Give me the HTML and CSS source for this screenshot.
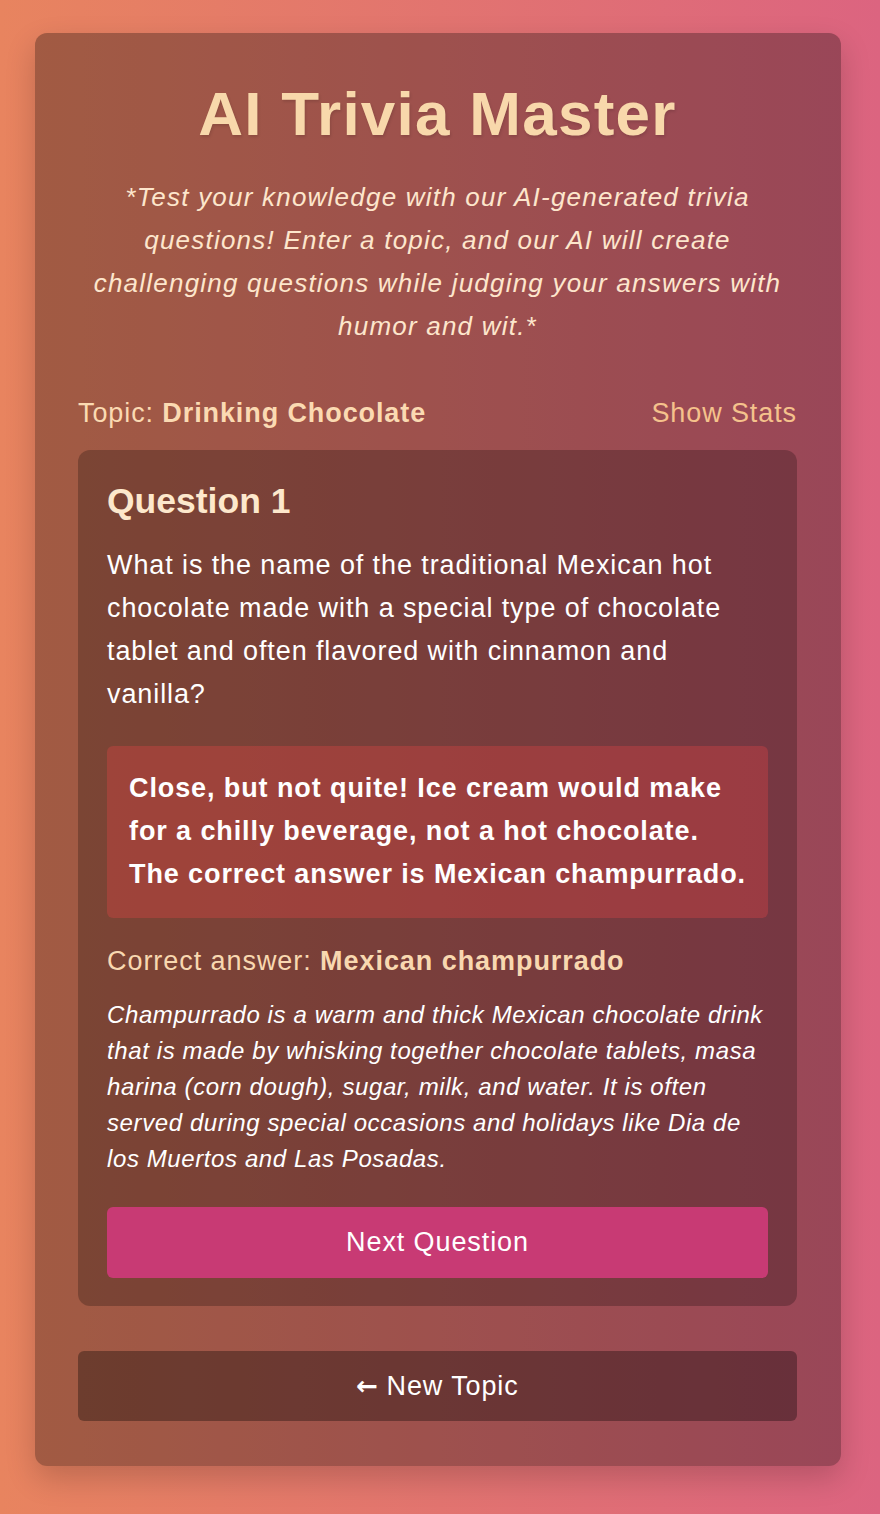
FILE: index.html
```html
<!DOCTYPE html>
<html lang="en">
<head>
<meta charset="utf-8">
<title>AI Trivia Master</title>
<link rel="stylesheet" href="styles.css">
</head>
<body>
<main class="container">
  <h1 class="title">AI Trivia Master</h1>
  <p class="subtitle">*Test your knowledge with our AI-generated trivia questions! Enter a topic, and our AI will create challenging questions while judging your answers with humor and wit.*</p>
  <div class="topic-row">
    <span class="topic">Topic: <strong>Drinking Chocolate</strong></span>
    <button class="stats-link">Show Stats</button>
  </div>
  <section class="card">
    <h2 class="q-title">Question 1</h2>
    <p class="q-text">What is the name of the traditional Mexican hot chocolate made with a special type of chocolate tablet and often flavored with cinnamon and vanilla?</p>
    <div class="feedback">Close, but not quite! Ice cream would make for a chilly beverage, not a hot chocolate. The correct answer is Mexican champurrado.</div>
    <p class="correct">Correct answer: <strong>Mexican champurrado</strong></p>
    <p class="explanation">Champurrado is a warm and thick Mexican chocolate drink that is made by whisking together chocolate tablets, masa harina (corn dough), sugar, milk, and water. It is often served during special occasions and holidays like Dia de los Muertos and Las Posadas.</p>
    <button class="btn-next">Next Question</button>
  </section>
  <button class="btn-new"><span class="arrow">←</span> New Topic</button>
</main>
</body>
</html>
```

FILE: styles.css
```css
* { box-sizing: border-box; }

html, body {
  margin: 0;
}

body {
  min-height: 1514px;
  padding: 33px 39px 48px 35px;
  background: linear-gradient(90deg, #e8845f 0%, #dc6480 100%);
  font-family: "Liberation Sans", Arial, Helvetica, sans-serif;
}

.container {
  background: rgba(0, 0, 0, 0.3);
  border-radius: 12px;
  padding: 45px 44px 45px 43px;
  box-shadow: 0 12px 30px rgba(0, 0, 0, 0.18);
}

.title {
  margin: 0 0 26px;
  text-align: center;
  font-size: 62px;
  line-height: 72px;
  letter-spacing: 1.25px;
  font-weight: 700;
  color: #f8d8ab;
  text-shadow: 1px 2px 3px rgba(0, 0, 0, 0.12);
}

.subtitle {
  margin: 0 0 47px;
  text-align: center;
  font-style: italic;
  font-size: 26px;
  line-height: 43px;
  letter-spacing: 1.22px;
  color: #fde6cc;
}

.topic-row {
  display: flex;
  justify-content: space-between;
  align-items: center;
  margin-bottom: 19px;
  line-height: 36px;
  font-size: 27px;
  letter-spacing: 0.9px;
}

.topic {
  color: #fbdab2;
}

.topic strong { font-weight: 700; }

.stats-link {
  background: none;
  border: 0;
  padding: 0;
  font: inherit;
  letter-spacing: inherit;
  color: #f5c28c;
  cursor: pointer;
}

.card {
  background: rgba(0, 0, 0, 0.23);
  border-radius: 12px;
  padding: 31px 29px 28px;
  display: flex;
  flex-direction: column;
}

.q-title {
  margin: 0 0 22px;
  font-size: 35.5px;
  line-height: 41px;
  font-weight: 700;
  color: #fde8cc;
}

.q-text {
  margin: 0 0 30px;
  font-size: 27px;
  line-height: 43px;
  letter-spacing: 0.9px;
  color: #ffffff;
}

.feedback {
  background: rgba(239, 68, 68, 0.3);
  border-radius: 6px;
  padding: 21px 22px 22px;
  font-size: 27px;
  line-height: 43px;
  letter-spacing: 0.9px;
  font-weight: 700;
  color: #ffffff;
  margin-bottom: 25px;
}

.correct {
  margin: 0 0 18px;
  font-size: 27px;
  line-height: 36px;
  letter-spacing: 0.94px;
  color: #f8d8b0;
}

.correct strong { font-weight: 700; }

.explanation {
  margin: 0 0 30px;
  font-size: 24px;
  line-height: 36px;
  letter-spacing: 0.6px;
  font-style: italic;
  color: #ffffff;
}

.btn-next {
  height: 71px;
  border: 0;
  border-radius: 6px;
  background: #c83a74;
  color: #ffffff;
  font: inherit;
  font-size: 27px;
  letter-spacing: 0.9px;
  cursor: pointer;
}

.btn-new {
  display: flex;
  align-items: center;
  justify-content: center;
  width: 100%;
  height: 70px;
  margin-top: 45px;
  border: 0;
  border-radius: 6px;
  background: rgba(0, 0, 0, 0.32);
  color: #ffffff;
  font: inherit;
  font-size: 27px;
  letter-spacing: 0.9px;
  cursor: pointer;
  white-space: pre;
}

.arrow {
  font-family: "DejaVu Sans", sans-serif;
  font-size: 26px;
  font-weight: 700;
  letter-spacing: 0;
}
```
